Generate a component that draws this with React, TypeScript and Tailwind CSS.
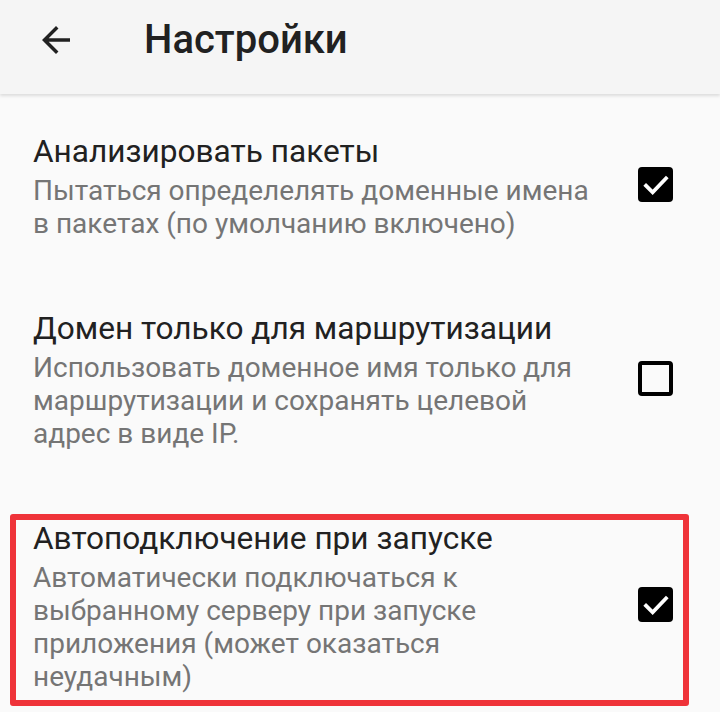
type Setting = {
  title: string;
  lines: string[];
  checked: boolean;
  highlighted?: boolean;
};

const settings: Setting[] = [
  {
    title: "Анализировать пакеты",
    lines: ["Пытаться определелять доменные имена", "в пакетах (по умолчанию включено)"],
    checked: true,
  },
  {
    title: "Домен только для маршрутизации",
    lines: [
      "Использовать доменное имя только для",
      "маршрутизации и сохранять целевой",
      "адрес в виде IP.",
    ],
    checked: false,
  },
  {
    title: "Автоподключение при запуске",
    lines: [
      "Автоматически подключаться к",
      "выбранному серверу при запуске",
      "приложения (может оказаться",
      "неудачным)",
    ],
    checked: true,
    highlighted: true,
  },
];

function Checkbox({ checked }: { checked: boolean }) {
  if (!checked) {
    return <div className="size-[35px] rounded-[4px] border-[4px] border-black" />;
  }
  return (
    <div className="flex size-[35px] items-center justify-center rounded-[4px] bg-black">
      <svg viewBox="0 0 24 24" className="size-[32px]" fill="none">
        <path
          d="M4.5 12.5l5 5L19.5 7"
          stroke="white"
          strokeWidth="2.8"
          strokeLinecap="square"
        />
      </svg>
    </div>
  );
}

export default function App() {
  return (
    <div className="flex h-[712px] w-[720px] flex-col overflow-hidden bg-[#fafafa] font-['Roboto',sans-serif]">
      <header className="relative z-10 flex h-[94px] shrink-0 items-start bg-[#f5f5f5] pt-[18px] shadow-[0_2px_3px_rgba(0,0,0,0.12)]">
        <div className="flex h-[44px] w-[112px] items-center justify-center">
          <svg viewBox="0 0 24 24" className="size-[42px]" fill="#212121">
            <path d="M20 11H7.83l5.59-5.59L12 4l-8 8 8 8 1.41-1.41L7.83 13H20v-2z" />
          </svg>
        </div>
        <h1 className="ml-[32px] text-[40px] font-medium leading-[44px] text-[#212121]">
          Настройки
        </h1>
      </header>

      <main className="flex flex-col gap-[69px] pt-[38px]">
        {settings.map((s) => (
          <div key={s.title} className="relative flex items-center pl-[33px] pr-[47px]">
            <div className="flex flex-1 flex-col">
              <div className="text-[31.6px] leading-[40px] text-[#212121]">{s.title}</div>
              <div className="mt-[2px] text-[28px] leading-[33px] text-[#757575]">
                {s.lines.map((line) => (
                  <div key={line} className="whitespace-nowrap">
                    {line}
                  </div>
                ))}
              </div>
            </div>
            <div className="-mt-[3px]">
              <Checkbox checked={s.checked} />
            </div>
            {s.highlighted && (
              <span className="pointer-events-none absolute -top-[5px] -bottom-[13px] left-[10px] right-[31px] rounded-[3px] border-[6px] border-[#ef3339]" />
            )}
          </div>
        ))}
      </main>
    </div>
  );
}
